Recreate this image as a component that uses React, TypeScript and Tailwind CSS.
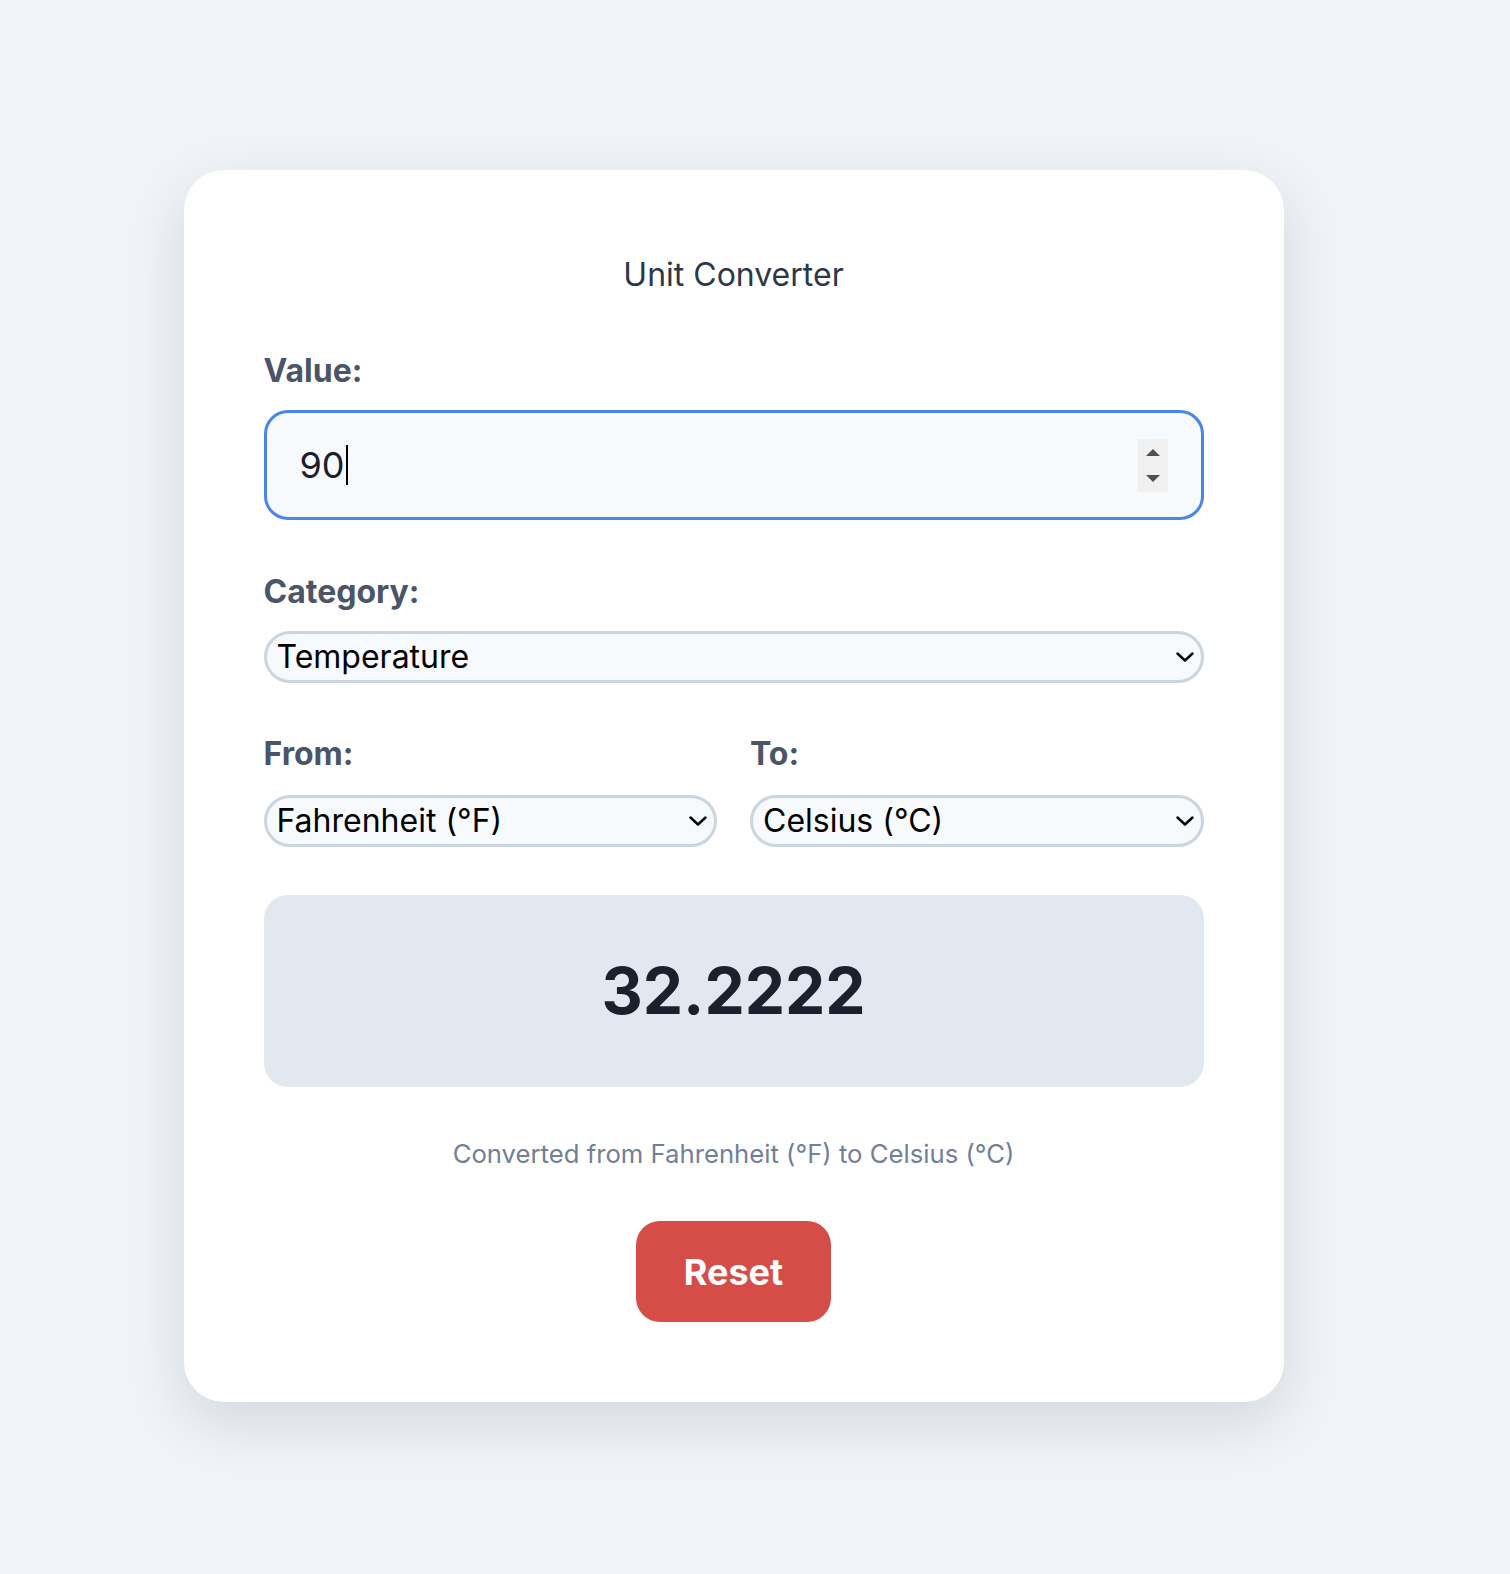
const font = "font-['Inter','Noto_Sans',sans-serif]";

function Chevron() {
  return (
    <svg
      className="pointer-events-none absolute right-[10px] top-1/2 -translate-y-1/2"
      width="18"
      height="10"
      viewBox="0 0 18 10"
      fill="none"
      stroke="black"
      strokeWidth="2.4"
      strokeLinecap="round"
      strokeLinejoin="round"
    >
      <polyline points="1.5,1.5 9,8.5 16.5,1.5" />
    </svg>
  );
}

function Select({ value, options }: { value: string; options: string[] }) {
  return (
    <div className="relative">
      <select
        defaultValue={value}
        className="block h-[52px] w-full appearance-none rounded-full border-[3px] border-[#cbd5e0] bg-[#f7fafc] pl-[10px] pr-10 text-[32px] leading-[46px] text-black outline-none"
      >
        {options.map((o) => (
          <option key={o}>{o}</option>
        ))}
      </select>
      <Chevron />
    </div>
  );
}

function Label({ children, gap = "mb-[18px]" }: { children: React.ReactNode; gap?: string }) {
  return (
    <div className={`${gap} text-[32px] font-bold leading-[40px] text-[#4a5568]`}>
      {children}
    </div>
  );
}

export default function App() {
  const temps = ["Celsius (°C)", "Fahrenheit (°F)", "Kelvin (K)"];

  return (
    <div className={`${font} min-h-screen bg-[#f0f4f8] pb-[170px] pr-[43px] pt-[170px]`}>
      <div className="mx-auto flex w-[1100px] flex-col rounded-[40px] bg-white px-20 pb-20 pt-[81px] shadow-[0_20px_60px_rgba(0,0,0,0.12)]">
        <h1 className="mb-[52px] text-center text-[32px] font-normal leading-[48px] text-[#2d3748]">
          Unit Converter
        </h1>

        {/* Value */}
        <Label gap="mb-[19px]">Value:</Label>
        <div className="relative flex h-[110px] items-center rounded-[24px] border-[3px] border-[#4a86e8] bg-[#f7fafc] pl-[33px] pr-[33px]">
          <span className="text-[36px] leading-none text-[#1a202c]">90</span>
          <span className="ml-[1px] h-[40px] w-[2px] bg-black" />
          <div className="ml-auto flex h-[53px] w-[30px] flex-col items-center justify-center gap-[19px] bg-[#f0f0f0]">
            <div className="h-0 w-0 border-x-[7px] border-b-[7px] border-x-transparent border-b-[#505050]" />
            <div className="h-0 w-0 border-x-[7px] border-t-[7px] border-x-transparent border-t-[#505050]" />
          </div>
        </div>

        {/* Category */}
        <div className="mt-[52px]">
          <Label gap="mb-[19px]">Category:</Label>
          <Select value="Temperature" options={["Length", "Weight", "Temperature", "Volume"]} />
        </div>

        {/* From / To */}
        <div className="mt-[51px] grid grid-cols-2 gap-[33px]">
          <div>
            <Label gap="mb-[21px]">From:</Label>
            <Select value="Fahrenheit (°F)" options={temps} />
          </div>
          <div>
            <Label gap="mb-[21px]">To:</Label>
            <Select value="Celsius (°C)" options={temps} />
          </div>
        </div>

        {/* Result */}
        <div className="mt-12 flex h-[192px] items-center justify-center rounded-[24px] bg-[#e2e8f0]">
          <span className="text-[64px] font-bold leading-none text-[#1a202c]">32.2222</span>
        </div>

        <p className="mt-[49px] text-center text-[25.7px] leading-[36px] text-[#718096]">
          Converted from Fahrenheit (°F) to Celsius (°C)
        </p>

        <div className="mt-[49px] flex justify-center">
          <button className="h-[101px] w-[195px] rounded-[24px] bg-[#d64d48] text-[36px] font-bold text-white">
            Reset
          </button>
        </div>
      </div>
    </div>
  );
}
